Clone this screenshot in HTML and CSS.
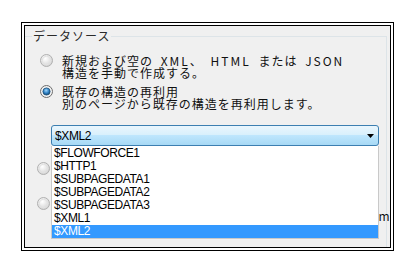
FILE: index.html
```html
<!DOCTYPE html>
<html lang="ja">
<head>
    <meta charset="UTF-8">
    <title>データ ソース</title>
    <link rel="stylesheet" href="styles.css">
</head>
<body>
    <div class="frame">
        <div class="panel">
            <fieldset class="source">
                <legend>データソース</legend>

                <div class="option first">
                    <svg class="radio" width="13" height="13" viewBox="0 0 13 13">
                        <defs>
                            <radialGradient id="rg-off" cx="0.4" cy="0.35" r="0.7">
                                <stop offset="0" stop-color="#ffffff"/>
                                <stop offset="1" stop-color="#d0d0d0"/>
                            </radialGradient>
                        </defs>
                        <circle cx="6.5" cy="6.5" r="6" fill="url(#rg-off)" stroke="#b0b0b0"/>
                        <circle cx="6.5" cy="6.5" r="4.2" fill="none" stroke="#e2e2e2"/>
                    </svg>
                    <div class="label wide">新規および空の <span class="latin">XML</span>、 <span class="latin">HTML</span> または <span class="latin">JSON</span><br>構造を手動で作成する。</div>
                </div>

                <div class="option second">
                    <svg class="radio" width="13" height="13" viewBox="0 0 13 13">
                        <defs>
                            <radialGradient id="rg-on" cx="0.45" cy="0.35" r="0.65">
                                <stop offset="0" stop-color="#9fd6fb"/>
                                <stop offset="0.6" stop-color="#2c7fc3"/>
                                <stop offset="1" stop-color="#15466e"/>
                            </radialGradient>
                        </defs>
                        <circle cx="6.5" cy="6.5" r="6" fill="#f2f2f2" stroke="#6c6c6c"/>
                        <circle cx="6.5" cy="6.5" r="3.6" fill="url(#rg-on)" stroke="#1d4f78" stroke-width="0.8"/>
                    </svg>
                    <div class="label">既存の構造の再利用<br>別のページから既存の構造を再利用します。</div>
                </div>

                <div class="combo">
                    <div class="combo-box">
                        <span>$XML2</span>
                        <svg class="arrow" width="7" height="4" viewBox="0 0 7 4">
                            <polygon points="0,0 7,0 3.5,4" fill="#000"/>
                        </svg>
                    </div>
                    <ul class="combo-list">
                        <li>$FLOWFORCE1</li>
                        <li>$HTTP1</li>
                        <li>$SUBPAGEDATA1</li>
                        <li>$SUBPAGEDATA2</li>
                        <li>$SUBPAGEDATA3</li>
                        <li>$XML1</li>
                        <li class="selected">$XML2</li>
                    </ul>
                </div>

                <div class="option third">
                    <svg class="radio" width="13" height="13" viewBox="0 0 13 13">
                        <circle cx="6.5" cy="6.5" r="6" fill="url(#rg-off)" stroke="#b0b0b0"/>
                        <circle cx="6.5" cy="6.5" r="4.2" fill="none" stroke="#e2e2e2"/>
                    </svg>
                    <div class="label">外部ファイルから構造を作成</div>
                </div>

                <div class="option fourth">
                    <svg class="radio" width="13" height="13" viewBox="0 0 13 13">
                        <circle cx="6.5" cy="6.5" r="6" fill="url(#rg-off)" stroke="#b0b0b0"/>
                        <circle cx="6.5" cy="6.5" r="4.2" fill="none" stroke="#e2e2e2"/>
                    </svg>
                    <div class="label">サンプルファイルから<br>サンプルファイルまたはスキーマの構造を使用 Program</div>
                </div>
            </fieldset>
        </div>
    </div>
</body>
</html>
```

FILE: styles.css
```css
* {
    box-sizing: border-box;
}

body {
    margin: 0;
    background-color: #ffffff;
    color: #111;
    font-family: "Noto Sans CJK JP", "Liberation Sans", sans-serif;
}

.frame {
    margin: 22px 0 0 21px;
    width: 373px;
    height: 229px;
    border: 1px solid #000;
    padding: 2px;
    background-color: #ffffff;
}

.panel {
    height: 100%;
    border: 1px solid #000;
    background-color: #f0f0f0;
    overflow: hidden;
}

.source {
    margin: 3px 3px 0 0;
    padding: 0;
    min-width: 0;
    height: 320px;
    border: 1px solid #dde4e8;
    border-left: none;
    border-bottom: none;
}

.source legend {
    margin-left: 7px;
    padding: 0 1px;
    font-size: 12px;
    letter-spacing: 1px;
    line-height: 14px;
    color: #2a2a2a;
}

.option {
    display: flex;
    align-items: flex-start;
    gap: 9px;
    margin-left: 15px;
}

.option.first {
    margin-top: 12px;
}

.option.second {
    margin-top: 7px;
}

.option.third {
    margin-top: 17px;
    margin-left: 12px;
}

.option.fourth {
    margin-top: 23px;
    margin-left: 12px;
}

.radio {
    flex: none;
    margin-top: -1px;
}

.label {
    font-size: 12px;
    letter-spacing: 1px;
    line-height: 12px;
    white-space: nowrap;
}

.label.wide {
    word-spacing: 4px;
}

.latin {
    letter-spacing: 2px;
}

.combo {
    position: relative;
    margin: 15px 0 0 26px;
    width: 328px;
    font-family: "Liberation Sans", sans-serif;
    font-size: 12px;
    letter-spacing: -0.4px;
    color: #000;
}

.combo-box {
    display: flex;
    align-items: center;
    justify-content: space-between;
    height: 21px;
    padding: 0 4px 0 3px;
    border: 1px solid #3c7fb1;
    border-radius: 3px;
    background: linear-gradient(#eaf6fd, #d9f0fc 45%, #bee6fd 50%, #a7d9f5);
}

.arrow {
    display: block;
}

.combo-list {
    position: absolute;
    top: 100%;
    left: 0;
    z-index: 2;
    width: 328px;
    margin: 0;
    padding: 1px 0 0;
    list-style: none;
    background-color: #ffffff;
    border: 1px solid #c9c9c9;
    border-top: none;
}

.combo-list li {
    height: 13px;
    line-height: 13px;
    padding-left: 2px;
}

.combo-list .selected {
    background-color: #3399ff;
    color: #ffffff;
}
```
